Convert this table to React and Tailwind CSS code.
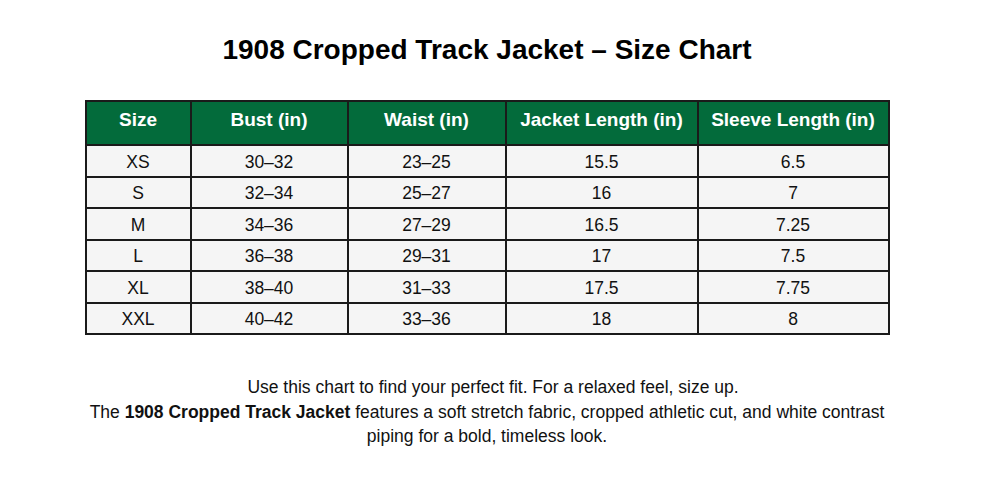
import React from "react";

const rows = [
  ["XS", "30–32", "23–25", "15.5", "6.5"],
  ["S", "32–34", "25–27", "16", "7"],
  ["M", "34–36", "27–29", "16.5", "7.25"],
  ["L", "36–38", "29–31", "17", "7.5"],
  ["XL", "38–40", "31–33", "17.5", "7.75"],
  ["XXL", "40–42", "33–36", "18", "8"],
];
const heads = ["Size", "Bust (in)", "Waist (in)", "Jacket Length (in)", "Sleeve Length (in)"];
const widths = ["w-[105px]", "w-[157px]", "w-[158px]", "w-[192px]", "w-[191px]"];

export default function App() {
  return (
    <div
      className="w-[1000px] h-[479px] bg-white flex flex-col items-center pr-[26px] text-black"
      style={{ fontFamily: '"Liberation Sans", Arial, sans-serif' }}
    >
      <h1 className="mt-[32px] text-[28px] leading-[36px] font-bold">
        1908 Cropped Track Jacket – Size Chart
      </h1>
      <table className="mt-[32px] border-collapse border-2 border-[#1a1a1a]">
        <thead>
          <tr className="bg-[#036b3b] text-white">
            {heads.map((h, i) => (
              <th
                key={h}
                className={`${widths[i]} h-[44px] border-2 border-[#1a1a1a] text-[19px] font-bold text-center p-0 pb-[5px]`}
              >
                {h}
              </th>
            ))}
          </tr>
        </thead>
        <tbody>
          {rows.map((r) => (
            <tr key={r[0]} className="bg-[#f5f5f5]">
              {r.map((c, i) => (
                <td
                  key={i}
                  className="h-[31.5px] border-2 border-[#1a1a1a] text-[17.5px] text-center p-0 pt-[2px] text-[#111]"
                >
                  {c}
                </td>
              ))}
            </tr>
          ))}
        </tbody>
      </table>
      <div className="mt-[40px] text-center text-[17.5px] leading-[24.5px] text-[#111] w-[820px]">
        <p className="pl-[12px]">Use this chart to find your perfect fit. For a relaxed feel, size up.</p>
        <p>
          The <b>1908 Cropped Track Jacket</b> features a soft stretch fabric, cropped athletic cut, and white contrast
          piping for a bold, timeless look.
        </p>
      </div>
    </div>
  );
}
